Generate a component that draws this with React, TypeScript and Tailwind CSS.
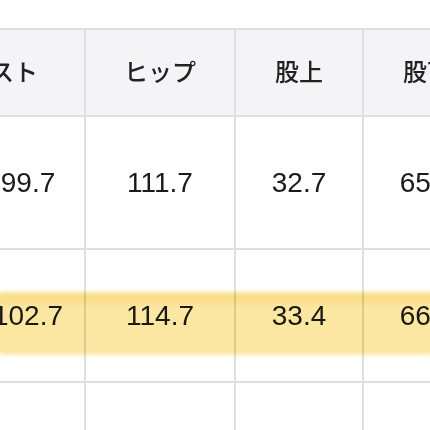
const font = { fontFamily: '"Liberation Sans", "Noto Sans CJK JP", sans-serif' };

const headers = ["ウエスト", "ヒップ", "股上", "股下"];
const rows = [
  ["99.7", "111.7", "32.7", "65.0"],
  ["102.7", "114.7", "33.4", "66.0"],
  ["", "", "", ""],
];
const rowHeights = ["h-[131px]", "h-[131px]", "h-[60px]"];

export default function App() {
  return (
    <div className="relative w-[430px] h-[430px] overflow-hidden bg-white" style={font}>
      <div className="mt-[28px] ml-[-28px] w-[520px] grid grid-cols-[112px_148px_126px_126px] gap-[2px] bg-[#dfdfe1] pt-[2px]">
        {headers.map((h, i) => (
          <div
            key={h}
            className={
              i === 0
                ? "h-[85px] bg-[#f4f4f6] flex items-center justify-end pr-[46px] whitespace-nowrap text-[24px] font-medium text-[#222]"
                : "h-[85px] bg-[#f4f4f6] flex items-center justify-center whitespace-nowrap text-[24px] font-medium text-[#222]"
            }
          >
            {h}
          </div>
        ))}
        {rows.map((r, ri) =>
          r.map((v, ci) => (
            <div
              key={ri + "-" + ci}
              className={`${rowHeights[ri]} bg-white flex items-center justify-center whitespace-nowrap text-[28px] text-[#1a1a1a]`}
            >
              {v}
            </div>
          ))
        )}
      </div>

      {/* highlighter stroke */}
      <div className="absolute left-[-6px] right-[-10px] top-[292px] h-[63px] rounded-[12px] bg-[#fbe7a2] mix-blend-multiply blur-[2px]" />
      <div className="absolute left-[-6px] right-[-10px] top-[292px] h-[12px] rounded-[8px] bg-[#fdf0c4] opacity-60 mix-blend-multiply blur-[2px]" />
    </div>
  );
}
